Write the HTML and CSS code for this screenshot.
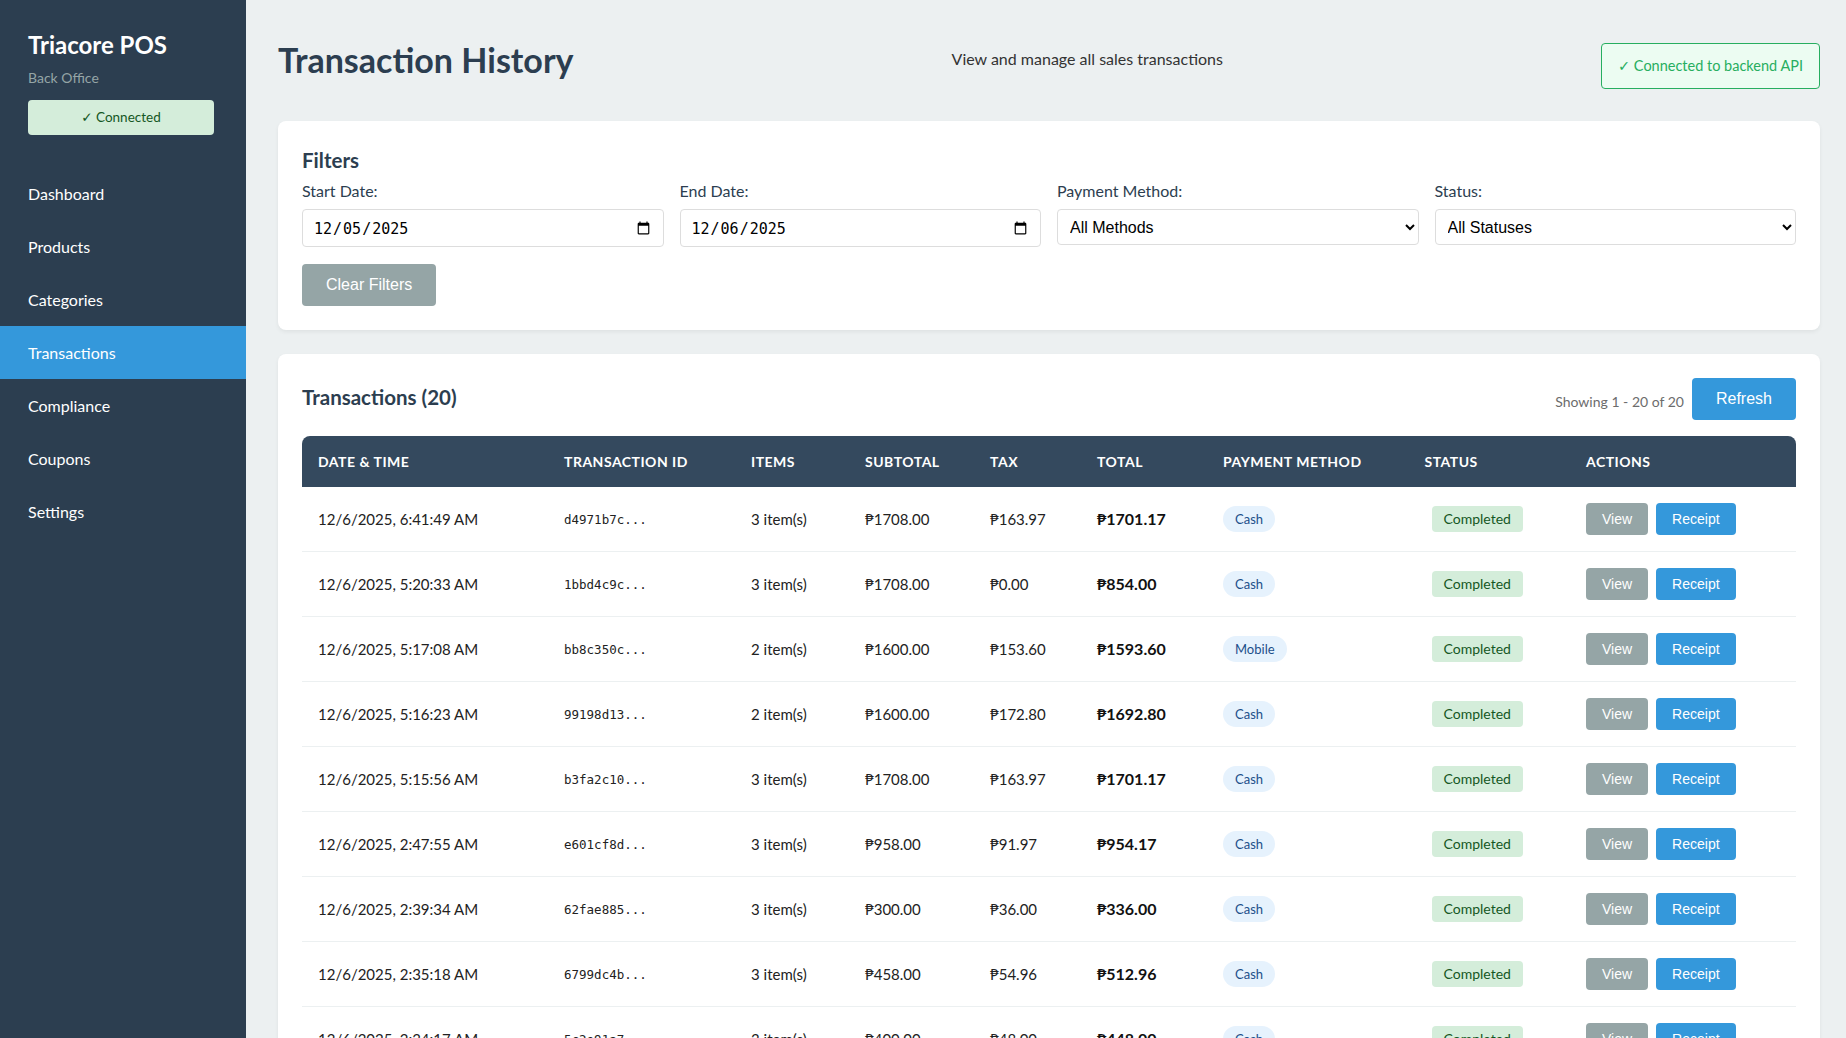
FILE: index.html
```html
<!DOCTYPE html>
<html lang="en">

<head>
    <meta charset="UTF-8">
    <title>Transaction History - Triacore POS</title>
    <link rel="stylesheet" href="styles.css">
</head>

<body>
    <div class="app">
        <aside class="sidebar">
            <div class="brand">
                <h2 class="brand-title">Triacore POS</h2>
                <p class="brand-sub">Back Office</p>
                <div class="conn-badge">✓ Connected</div>
            </div>
            <nav class="nav">
                <a href="#" class="nav-item">Dashboard</a>
                <a href="#" class="nav-item">Products</a>
                <a href="#" class="nav-item">Categories</a>
                <a href="#" class="nav-item active">Transactions</a>
                <a href="#" class="nav-item">Compliance</a>
                <a href="#" class="nav-item">Coupons</a>
                <a href="#" class="nav-item">Settings</a>
            </nav>
        </aside>

        <main class="main">
            <div class="page-header">
                <h1>Transaction History</h1>
                <p class="page-sub">View and manage all sales transactions</p>
                <div class="api-status">✓ Connected to backend API</div>
            </div>

            <section class="card">
                <h3 class="card-title">Filters</h3>
                <div class="filter-grid">
                    <div class="form-group">
                        <label for="startDate">Start Date:</label>
                        <input type="date" id="startDate" value="2025-12-05">
                    </div>
                    <div class="form-group">
                        <label for="endDate">End Date:</label>
                        <input type="date" id="endDate" value="2025-12-06">
                    </div>
                    <div class="form-group">
                        <label for="method">Payment Method:</label>
                        <select id="method">
                            <option>All Methods</option>
                            <option>Cash</option>
                            <option>Card</option>
                            <option>Mobile</option>
                        </select>
                    </div>
                    <div class="form-group">
                        <label for="status">Status:</label>
                        <select id="status">
                            <option>All Statuses</option>
                            <option>Completed</option>
                            <option>Refunded</option>
                            <option>Voided</option>
                        </select>
                    </div>
                </div>
                <button class="btn btn-gray btn-lg">Clear Filters</button>
            </section>

            <section class="card">
                <div class="card-head">
                    <h3 class="card-title-lg">Transactions (20)</h3>
                    <div class="card-tools">
                        <span class="showing">Showing 1 - 20 of 20</span>
                        <button class="btn btn-blue btn-lg">Refresh</button>
                    </div>
                </div>

                <div class="table-wrap">
                    <table class="tx-table">
                        <colgroup>
                            <col class="c-date">
                            <col class="c-id">
                            <col class="c-items">
                            <col class="c-sub">
                            <col class="c-tax">
                            <col class="c-total">
                            <col class="c-method">
                            <col class="c-status">
                            <col class="c-actions">
                        </colgroup>
                        <thead>
                            <tr>
                                <th>Date &amp; Time</th>
                                <th>Transaction ID</th>
                                <th>Items</th>
                                <th>Subtotal</th>
                                <th>Tax</th>
                                <th>Total</th>
                                <th>Payment Method</th>
                                <th>Status</th>
                                <th>Actions</th>
                            </tr>
                        </thead>
                        <tbody>
                            <tr>
                                <td>12/6/2025, 6:41:49 AM</td>
                                <td class="tx-id">d4971b7c...</td>
                                <td>3 item(s)</td>
                                <td>₱1708.00</td>
                                <td>₱163.97</td>
                                <td class="total">₱1701.17</td>
                                <td><span class="pill">Cash</span></td>
                                <td><span class="status">Completed</span></td>
                                <td><button class="btn btn-gray">View</button><button class="btn btn-blue">Receipt</button></td>
                            </tr>
                            <tr>
                                <td>12/6/2025, 5:20:33 AM</td>
                                <td class="tx-id">1bbd4c9c...</td>
                                <td>3 item(s)</td>
                                <td>₱1708.00</td>
                                <td>₱0.00</td>
                                <td class="total">₱854.00</td>
                                <td><span class="pill">Cash</span></td>
                                <td><span class="status">Completed</span></td>
                                <td><button class="btn btn-gray">View</button><button class="btn btn-blue">Receipt</button></td>
                            </tr>
                            <tr>
                                <td>12/6/2025, 5:17:08 AM</td>
                                <td class="tx-id">bb8c350c...</td>
                                <td>2 item(s)</td>
                                <td>₱1600.00</td>
                                <td>₱153.60</td>
                                <td class="total">₱1593.60</td>
                                <td><span class="pill">Mobile</span></td>
                                <td><span class="status">Completed</span></td>
                                <td><button class="btn btn-gray">View</button><button class="btn btn-blue">Receipt</button></td>
                            </tr>
                            <tr>
                                <td>12/6/2025, 5:16:23 AM</td>
                                <td class="tx-id">99198d13...</td>
                                <td>2 item(s)</td>
                                <td>₱1600.00</td>
                                <td>₱172.80</td>
                                <td class="total">₱1692.80</td>
                                <td><span class="pill">Cash</span></td>
                                <td><span class="status">Completed</span></td>
                                <td><button class="btn btn-gray">View</button><button class="btn btn-blue">Receipt</button></td>
                            </tr>
                            <tr>
                                <td>12/6/2025, 5:15:56 AM</td>
                                <td class="tx-id">b3fa2c10...</td>
                                <td>3 item(s)</td>
                                <td>₱1708.00</td>
                                <td>₱163.97</td>
                                <td class="total">₱1701.17</td>
                                <td><span class="pill">Cash</span></td>
                                <td><span class="status">Completed</span></td>
                                <td><button class="btn btn-gray">View</button><button class="btn btn-blue">Receipt</button></td>
                            </tr>
                            <tr>
                                <td>12/6/2025, 2:47:55 AM</td>
                                <td class="tx-id">e601cf8d...</td>
                                <td>3 item(s)</td>
                                <td>₱958.00</td>
                                <td>₱91.97</td>
                                <td class="total">₱954.17</td>
                                <td><span class="pill">Cash</span></td>
                                <td><span class="status">Completed</span></td>
                                <td><button class="btn btn-gray">View</button><button class="btn btn-blue">Receipt</button></td>
                            </tr>
                            <tr>
                                <td>12/6/2025, 2:39:34 AM</td>
                                <td class="tx-id">62fae885...</td>
                                <td>3 item(s)</td>
                                <td>₱300.00</td>
                                <td>₱36.00</td>
                                <td class="total">₱336.00</td>
                                <td><span class="pill">Cash</span></td>
                                <td><span class="status">Completed</span></td>
                                <td><button class="btn btn-gray">View</button><button class="btn btn-blue">Receipt</button></td>
                            </tr>
                            <tr>
                                <td>12/6/2025, 2:35:18 AM</td>
                                <td class="tx-id">6799dc4b...</td>
                                <td>3 item(s)</td>
                                <td>₱458.00</td>
                                <td>₱54.96</td>
                                <td class="total">₱512.96</td>
                                <td><span class="pill">Cash</span></td>
                                <td><span class="status">Completed</span></td>
                                <td><button class="btn btn-gray">View</button><button class="btn btn-blue">Receipt</button></td>
                            </tr>
                            <tr>
                                <td>12/6/2025, 2:34:17 AM</td>
                                <td class="tx-id">5c2e91a7...</td>
                                <td>3 item(s)</td>
                                <td>₱400.00</td>
                                <td>₱48.00</td>
                                <td class="total">₱448.00</td>
                                <td><span class="pill">Cash</span></td>
                                <td><span class="status">Completed</span></td>
                                <td><button class="btn btn-gray">View</button><button class="btn btn-blue">Receipt</button></td>
                            </tr>
                            <tr>
                                <td>12/6/2025, 2:30:02 AM</td>
                                <td class="tx-id">a81f03de...</td>
                                <td>1 item(s)</td>
                                <td>₱250.00</td>
                                <td>₱30.00</td>
                                <td class="total">₱280.00</td>
                                <td><span class="pill">Cash</span></td>
                                <td><span class="status">Completed</span></td>
                                <td><button class="btn btn-gray">View</button><button class="btn btn-blue">Receipt</button></td>
                            </tr>
                        </tbody>
                    </table>
                </div>
            </section>
        </main>
    </div>
</body>

</html>
```

FILE: styles.css
```css
* {
    box-sizing: border-box;
}

body {
    font-family: Lato, "Noto Sans", "DejaVu Sans", sans-serif;
    margin: 0;
    padding: 0;
    background: #ecf0f1;
    color: #333;
}

.app {
    display: flex;
    min-height: 100vh;
}

/* sidebar */
.sidebar {
    width: 246px;
    flex-shrink: 0;
    background: #2c3e50;
    color: #ecf0f1;
}

.brand {
    padding: 30px 32px 0 28px;
}

.brand-title {
    margin: 0 0 9px;
    font-size: 24px;
    line-height: 30px;
    font-weight: 700;
    color: #fff;
}

.brand-sub {
    margin: 0 0 13px;
    font-size: 14px;
    line-height: 18px;
    color: #95a5a6;
}

.conn-badge {
    padding: 8px;
    font-size: 13.5px;
    line-height: 19px;
    text-align: center;
    background: #d4edda;
    color: #155724;
    border-radius: 4px;
}

.nav {
    margin-top: 32px;
}

.nav-item {
    display: block;
    padding: 16px 28px;
    font-size: 16px;
    line-height: 21px;
    color: #fff;
    text-decoration: none;
}

.nav-item.active {
    background: #3498db;
}

/* main */
.main {
    flex: 1;
    padding: 39px 26px 32px 32px;
}

.page-header {
    display: flex;
    justify-content: space-between;
    align-items: flex-start;
    margin-bottom: 32px;
}

.page-header h1 {
    margin: 0;
    font-size: 34px;
    line-height: 42px;
    font-weight: 700;
    color: #2c3e50;
}

.page-sub {
    margin: 9px 0 0;
    font-size: 16px;
    line-height: 22px;
    color: #333;
}

.api-status {
    margin-top: 4px;
    padding: 12px 16px;
    font-size: 14.5px;
    line-height: 20px;
    color: #27ae60;
    background: #ecfcf2;
    border: 1px solid #27ae60;
    border-radius: 4px;
}

.card {
    background: #fff;
    border-radius: 8px;
    padding: 24px;
    margin-bottom: 24px;
    box-shadow: 0 2px 4px rgba(0, 0, 0, 0.06);
}

.card-title {
    margin: 3px 0 9px;
    font-size: 20.5px;
    line-height: 24px;
    font-weight: 700;
    color: #2c3e50;
}

.filter-grid {
    display: grid;
    grid-template-columns: repeat(4, 1fr);
    gap: 16px;
    margin-bottom: 17px;
}

label {
    display: block;
    margin-bottom: 8px;
    font-size: 16px;
    line-height: 20px;
    color: #2c3e50;
}

input[type="date"],
select {
    width: 100%;
    border: 1px solid #ddd;
    border-radius: 4px;
    background: #fff;
    color: #000;
}

input[type="date"] {
    height: 38px;
    padding: 1px 10px 0;
    font-family: "DejaVu Sans Mono", "Liberation Mono", monospace;
    font-size: 15px;
}

select {
    height: 36px;
    padding: 0 8px;
    font-family: "Liberation Sans", Arial, sans-serif;
    font-size: 16px;
}

.btn {
    border: none;
    border-radius: 4px;
    padding: 8px 16px;
    font-family: "Liberation Sans", Arial, sans-serif;
    font-size: 14px;
    line-height: 16px;
    color: #fff;
    cursor: pointer;
}

.btn-lg {
    padding: 12px 24px;
    font-size: 16px;
    line-height: 18px;
}

.btn-gray {
    background: #95a5a6;
}

.btn-blue {
    background: #3498db;
}

.btn + .btn {
    margin-left: 8px;
}

.card-head {
    display: flex;
    justify-content: space-between;
    align-items: flex-start;
    margin-bottom: 16px;
}

.card-title-lg {
    margin: 6px 0 0;
    font-size: 20.5px;
    line-height: 26px;
    font-weight: 700;
    color: #2c3e50;
}

.card-tools {
    display: flex;
    align-items: center;
    gap: 8px;
}

.showing {
    font-size: 14px;
    color: #6c6c6c;
    padding-top: 4px;
}

/* table */
.table-wrap {
    border-radius: 8px 8px 0 0;
    overflow: hidden;
}

.tx-table {
    width: 100%;
    border-collapse: collapse;
    table-layout: fixed;
}

.c-date { width: 246px; }
.c-id { width: 187px; }
.c-items { width: 114px; }
.c-sub { width: 125px; }
.c-tax { width: 107px; }
.c-total { width: 126px; }
.c-method { width: 201.5px; }
.c-status { width: 161.5px; }
.c-actions { width: 226px; }

.tx-table th {
    padding: 16px;
    background: #34495e;
    color: #fff;
    font-size: 14px;
    line-height: 19px;
    font-weight: 700;
    text-transform: uppercase;
    letter-spacing: 0.5px;
    text-align: left;
    white-space: nowrap;
}

.tx-table td {
    padding: 16px;
    border-bottom: 1px solid #ecf0f1;
    font-size: 15px;
    line-height: 20px;
    vertical-align: middle;
    white-space: nowrap;
    color: #222;
}

.tx-table td.tx-id {
    font-family: "DejaVu Sans Mono", "Liberation Mono", monospace;
    font-size: 12.5px;
    padding-top: 18px;
}

.tx-table td.total {
    font-size: 16px;
    font-weight: 700;
    color: #111;
}

.pill {
    display: inline-block;
    padding: 4px 12px;
    border-radius: 13px;
    background: #e6f2fd;
    color: #1c4f8a;
    font-size: 13px;
    line-height: 18px;
}

.status {
    display: inline-block;
    margin-left: 7px;
    padding: 4px 12px;
    border-radius: 4px;
    background: #d4edda;
    color: #155724;
    font-size: 14px;
    line-height: 18px;
}
```
